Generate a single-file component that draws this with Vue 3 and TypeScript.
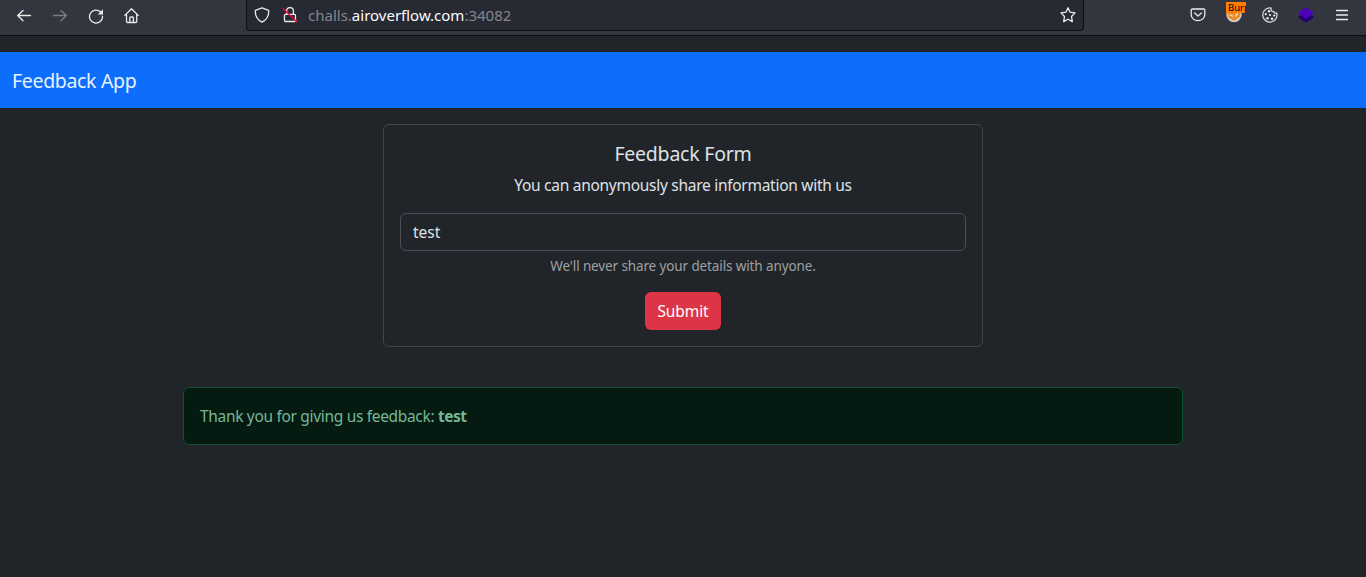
<script setup lang="ts">
import { ref } from 'vue'

const message = ref('test')
const submitted = ref('test')

function submit() {
  submitted.value = message.value
}
</script>

<template>
  <div class="window">
    <header class="toolbar">
      <nav class="nav-buttons">
        <svg viewBox="0 0 16 16"><path d="M14.5 7.5H1.8M7 2.5 1.7 7.5 7 12.8" /></svg>
        <svg class="dim" viewBox="0 0 16 16"><path d="M1.5 7.5h12.7M9 2.5l5.3 5L9 12.8" /></svg>
        <svg viewBox="0 0 16 16"><path d="M12.6 4A6.5 6.5 0 1 0 14.5 8.2" /><path class="solid" d="M15 1.2v5.3H9.7z" /></svg>
        <svg viewBox="0 0 16 16"><path d="M.8 7.4 7.5.8l6.7 6.6M2.5 6.3v7.2q0 1 1 1h8.2q1 0 1-1V6.3M5.8 14.2V10q0-1 1-1h1.6q1 0 1 1v4.2" /></svg>
      </nav>
      <div class="address">
        <svg viewBox="0 0 16 16"><path d="M8 .9 14.6 3.3c.5 5.4-1.8 9.4-6.6 11.8C3.2 12.7.9 8.7 1.4 3.3z" /></svg>
        <svg class="lock" viewBox="0 0 16 16">
          <path d="M4.6 6.8V4a3.4 3.4 0 0 1 6.8 0v2.8M3.5 7.3h9q1 0 1 1v5.2q0 1-1 1h-9q-1 0-1-1V8.3q0-1 1-1z" />
          <path class="slash" d="m1.3 1.8 13.5 13" />
        </svg>
        <span class="url">challs.<b>airoverflow.com</b>:34082</span>
        <svg class="star" viewBox="0 0 16 16"><path d="m8 .8 2.1 4.4 4.9.7-3.5 3.6.8 5.1L8 12.2l-4.3 2.4.8-5.1L1 5.9l4.9-.7z" /></svg>
      </div>
      <div class="extensions">
        <svg viewBox="0 0 16 16"><path d="M2.4 2h11.2q1.2 0 1.2 1.2v4.2a6.8 6.3 0 0 1-13.6 0V3.2Q1.2 2 2.4 2zM4.7 6l3.3 3.1L11.3 6" /></svg>
        <div class="proxy">
          <svg viewBox="0 0 16 16">
            <circle class="face" cx="8" cy="7.5" r="7.7" />
            <path class="fox" d="M1 3h14l-1.2 7L8 14 2.2 10z" />
            <path class="mark" d="m4 8 2.5 1M11.5 6.8 9.5 9" />
          </svg>
          <span class="badge">Burp</span>
        </div>
        <svg class="cookie" viewBox="0 0 16 16">
          <path d="M7.2.9a7.1 7.1 0 1 0 7.5 5.1C13 6.7 11.8 5.9 11.8 4.5 9.7 4.9 8.4 2.9 9.2 1.1Q8.4.8 7.2.9z" />
          <g class="solid"><circle cx="7" cy="4.2" r="1.2" /><circle cx="3.8" cy="7.2" r="1.1" /><circle cx="8" cy="8" r="1.1" /><circle cx="12.2" cy="8.6" r="1.1" /><circle cx="5.5" cy="11.3" r="1.2" /><circle cx="10" cy="11.8" r="1.2" /></g>
        </svg>
        <svg class="layers" viewBox="0 0 16 16"><path class="lower" d="m0 10.3 3-2.2h10l3 2.2-8 5.5z" /><path class="upper" d="m8 .1 8 6.1-8 5.6-8-5.6z" /></svg>
        <svg class="menu" viewBox="0 0 16 16"><path d="M2.5 3.5h11M2.5 8h11M2.5 12.5h11" /></svg>
      </div>
    </header>

    <div class="navbar"><span class="brand">Feedback App</span></div>

    <main>
      <form class="card" @submit.prevent="submit">
        <h5>Feedback Form</h5>
        <p class="lead">You can anonymously share information with us</p>
        <input v-model="message" type="text" aria-label="Feedback" />
        <div class="hint">We'll never share your details with anyone.</div>
        <button type="submit">Submit</button>
      </form>
      <div class="alert" role="alert"><span>Thank you for giving us feedback: </span><b>{{ submitted }}</b></div>
    </main>
  </div>
</template>

<style>
body {
  margin: 0;
  background: #212529;
}
</style>

<style scoped>
* {
  box-sizing: border-box;
}
.window {
  height: 577px;
  overflow: hidden;
  background: #212529;
  color: #dee2e6;
  font: 15.5px/24px "Noto Sans", sans-serif;
}
.toolbar {
  height: 36px;
  display: flex;
  align-items: flex-start;
  background: #33363e;
  border-bottom: 1px solid #0d0e12;
}
svg {
  display: block;
  flex: none;
  width: 16px;
  height: 16px;
  fill: none;
  stroke: #ecebea;
  stroke-width: 1.3;
  stroke-linecap: round;
  stroke-linejoin: round;
}
.solid {
  fill: #ecebea;
  stroke: none;
}
.nav-buttons {
  display: flex;
  gap: 20px;
  width: 246px;
  padding: 8px 0 0 16px;
}
.dim {
  opacity: 0.4;
}
.address {
  display: flex;
  align-items: center;
  width: 838px;
  height: 31px;
  padding: 0 7px;
  background: #272933;
  border: 1px solid #0d0e12;
  border-top: 0;
  border-radius: 0 0 4px 4px;
}
.lock {
  margin-left: 12px;
}
.slash {
  stroke: #ff0039;
}
.url {
  margin-left: 10px;
  color: #85868d;
  font-size: 15px;
  white-space: nowrap;
}
.url b {
  color: #fbfbfe;
  font-weight: 400;
}
.star {
  margin-left: auto;
}
.extensions {
  display: flex;
  gap: 20px;
  padding: 7px 0 0 106px;
}
.proxy {
  position: relative;
}
.face {
  fill: #cfd0d1;
  stroke: none;
}
.fox {
  fill: #ef8a25;
  stroke: none;
}
.mark {
  stroke: #f9dfbd;
}
.badge {
  position: absolute;
  left: 0;
  top: -5px;
  width: 20px;
  height: 11px;
  padding-left: 2px;
  overflow: hidden;
  background: #ff7f00;
  color: #000;
  font-size: 9.5px;
  line-height: 11px;
}
.cookie {
  stroke: #d4d4d5;
}
.layers {
  stroke: none;
}
.lower {
  fill: #20006e;
  stroke: none;
}
.upper {
  fill: #4c00b8;
  stroke: none;
}
.navbar {
  display: flex;
  align-items: center;
  height: 56px;
  margin-top: 16px;
  padding: 2px 12px 0;
  background: #0d6efd;
}
.brand {
  color: #e9f1ff;
  font-size: 19.5px;
  line-height: 30px;
  letter-spacing: -0.33px;
}
main {
  display: flex;
  flex-direction: column;
  align-items: center;
  padding-top: 16px;
}
.card {
  display: flex;
  flex-direction: column;
  align-items: center;
  width: 600px;
  padding: 16px;
  border: 1px solid #414549;
  border-radius: 6px;
}
h5 {
  margin: 0 0 8px;
  padding-top: 1px;
  height: 24px;
  font-size: 19.5px;
  font-weight: 400;
  line-height: 24px;
  letter-spacing: -0.22px;
}
.lead {
  margin: 0 0 16px;
  letter-spacing: -0.28px;
}
input {
  width: 100%;
  height: 38px;
  padding: 6px 12px;
  background: #212529;
  color: #dee2e6;
  border: 1px solid #495057;
  border-radius: 6px;
  outline: 0;
  font: inherit;
}
.hint {
  margin: 5px 0 15px;
  color: #9da0a4;
  font-size: 13.5px;
  line-height: 21px;
  letter-spacing: -0.12px;
}
button {
  width: 76px;
  height: 38px;
  padding: 0;
  border: 0;
  border-radius: 6px;
  background: #dc3545;
  color: #fff;
  font: inherit;
  letter-spacing: -0.1px;
}
.alert {
  width: 1000px;
  height: 58px;
  margin-top: 40px;
  padding: 16px;
  background: #051b11;
  color: #75b798;
  border: 1px solid #0f5132;
  border-radius: 6px;
  white-space: pre;
  letter-spacing: -0.32px;
}
.alert b {
  letter-spacing: -0.5px;
}
</style>
